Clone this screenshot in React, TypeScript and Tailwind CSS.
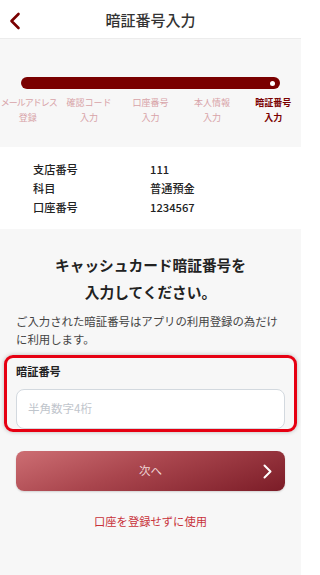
import React from "react";

const steps = [
  ["メールアドレス", "登録"],
  ["確認コード", "入力"],
  ["口座番号", "入力"],
  ["本人情報", "入力"],
  ["暗証番号", "入力"],
];

export default function App() {
  return (
    <div
      className="w-[301px] h-[575px] overflow-hidden bg-[#f7f7f7] text-[#222]"
      style={{ fontFamily: '"Noto Sans CJK JP", "Noto Sans", sans-serif' }}
    >
      {/* header */}
      <div className="relative h-[39px] bg-white border-b border-[#ececec] flex items-center justify-center">
        <svg
          className="absolute left-[8px] top-[12px]"
          width="14"
          height="18"
          viewBox="0 0 14 18"
          fill="none"
        >
          <path d="M10.5 2 L3.5 9 L10.5 16" stroke="#7a0000" strokeWidth="2.6" strokeLinecap="round" strokeLinejoin="round" />
        </svg>
        <span className="text-[15px] font-medium text-[#333] leading-none">暗証番号入力</span>
      </div>

      {/* progress */}
      <div className="h-[108px] pt-[38px] overflow-hidden">
        <div className="mx-[21px] h-[12px] rounded-full bg-[#7a0000] flex items-center justify-end pr-[5px]">
          <div className="w-[5px] h-[5px] rounded-full bg-white" />
        </div>
        <div className="w-[307px] -ml-[3px] flex mt-[7px]">
          {steps.map((s, i) => (
            <div
              key={i}
              className={
                i === 4
                  ? "flex-1 flex flex-col items-center text-[9px] leading-[14.5px] font-bold text-[#7a0000] whitespace-nowrap"
                  : "flex-1 flex flex-col items-center text-[9px] leading-[14.5px] text-[#d7a3a8] whitespace-nowrap"
              }
            >
              <span className={i === 0 ? "tracking-[-1px] pl-[2px]" : ""}>{s[0]}</span>
              <span>{s[1]}</span>
            </div>
          ))}
        </div>
      </div>

      {/* info */}
      <div className="bg-white h-[82px] pt-[13px] pl-[33px] text-[11.2px] font-medium leading-[19px]">
        <div className="flex">
          <span className="w-[117px]">支店番号</span>
          <span>111</span>
        </div>
        <div className="flex">
          <span className="w-[117px]">科目</span>
          <span>普通預金</span>
        </div>
        <div className="flex">
          <span className="w-[117px]">口座番号</span>
          <span>1234567</span>
        </div>
      </div>

      {/* heading */}
      <div className="pt-[22px] text-center text-[14.7px] font-bold leading-[27px] text-[#222]">
        <div>キャッシュカード暗証番号を</div>
        <div>入力してください。</div>
      </div>

      <p className="px-[16px] mt-[8px] text-[11.4px] leading-[17.5px] text-[#444]">
        ご入力された暗証番号はアプリの利用登録の為だけに利用します。
      </p>

      {/* highlighted input */}
      <div className="mx-[4px] mt-[7px] h-[77px] border-[3px] border-[#e60012] rounded-[9px] shadow-[0_0_4px_rgba(0,0,0,0.25)] px-[9px] pt-[5px]">
        <div className="text-[11.2px] font-bold leading-[17px] text-[#222]">暗証番号</div>
        <div className="mt-[9px] h-[40px] bg-white border-[1.5px] border-[#d3d9df] rounded-[8px] flex items-center pl-[11px] text-[11.5px] text-[#bfc5cc]">
          半角数字4桁
        </div>
      </div>

      {/* button */}
      <div className="mx-[16px] mt-[19px] h-[40px] rounded-[8px] bg-[linear-gradient(160deg,#cd6e73_0%,#a9454d_45%,#7b1c27_100%)] relative flex items-center justify-center shadow-[0_1px_2px_rgba(0,0,0,0.15)]">
        <span className="text-[11.5px] text-[#efd6d6]">次へ</span>
        <svg className="absolute right-[12px] top-[13px]" width="11" height="15" viewBox="0 0 11 15" fill="none">
          <path d="M2.5 1.5 L8.5 7.5 L2.5 13.5" stroke="white" strokeWidth="2" strokeLinecap="round" strokeLinejoin="round" />
        </svg>
      </div>

      <div className="mt-[22px] text-center text-[11.3px] text-[#c8323a]">口座を登録せずに使用</div>
    </div>
  );
}
